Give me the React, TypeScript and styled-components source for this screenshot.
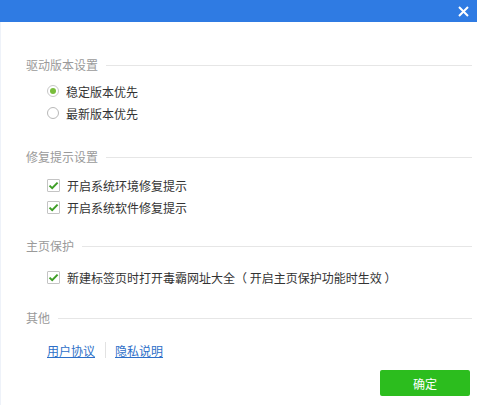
import styled, { createGlobalStyle } from 'styled-components';

const GlobalStyle = createGlobalStyle`
  html, body {
    margin: 0;
    padding: 0;
    background: #ffffff;
  }
  body {
    font-family: "Noto Sans CJK SC", "Liberation Sans", sans-serif;
    font-size: 12px;
  }
`;

type Gap = { $top: number };

const Window = styled.div`
  width: 477px;
  height: 405px;
  display: flex;
  flex-direction: column;
  background: #ffffff;
  overflow: hidden;
`;

const TitleBar = styled.div`
  height: 22px;
  flex: none;
  background: #2f7be3;
  display: flex;
  justify-content: flex-end;
  align-items: center;
  padding-right: 7px;
`;

const CloseButton = styled.button`
  width: 14px;
  height: 14px;
  border: 0;
  padding: 0;
  background: transparent;
  display: flex;
  align-items: center;
  justify-content: center;
  cursor: pointer;
`;

const Body = styled.div`
  flex: 1;
  display: flex;
  flex-direction: column;
  padding: 0 5px 0 25px;
  border-left: 1px solid #eef2f9;
`;

const SectionTitle = styled.div<Gap>`
  display: flex;
  align-items: center;
  gap: 8px;
  height: 16px;
  margin-top: ${(p) => p.$top}px;
  color: #9a9a9a;
  line-height: 16px;
  white-space: nowrap;

  &::after {
    content: '';
    flex: 1;
    height: 1px;
    background: #e6e6e6;
  }
`;

const Options = styled.div<Gap>`
  display: flex;
  flex-direction: column;
  margin-top: ${(p) => p.$top}px;
  padding-left: 21px;
`;

const OptionRow = styled.label`
  display: flex;
  align-items: center;
  gap: 7px;
  height: 22px;
  color: #333333;
  white-space: nowrap;
`;

const Radio = styled.span<{ $checked?: boolean }>`
  box-sizing: border-box;
  width: 12px;
  height: 12px;
  border-radius: 50%;
  border: 1px solid ${(p) => (p.$checked ? '#c8c8c8' : '#b8b8b8')};
  display: flex;
  align-items: center;
  justify-content: center;
  background: #ffffff;

  &::after {
    content: '';
    display: ${(p) => (p.$checked ? 'block' : 'none')};
    width: 6px;
    height: 6px;
    border-radius: 50%;
    background: #79bd3c;
  }
`;

const CheckBox = styled.span`
  box-sizing: border-box;
  width: 13px;
  height: 13px;
  border: 1px solid #c4c4c4;
  border-radius: 1px;
  display: flex;
  align-items: center;
  justify-content: center;
  background: #ffffff;
`;

const Links = styled.div<Gap>`
  display: flex;
  align-items: center;
  height: 22px;
  margin-top: ${(p) => p.$top}px;
  padding-left: 21px;
`;

const Link = styled.a`
  color: #2d6fc8;
  text-decoration: underline;
  cursor: pointer;
`;

const Divider = styled.span`
  width: 1px;
  height: 16px;
  background: #e2e2e2;
  margin: 0 9px 0 10px;
`;

const Footer = styled.div`
  display: flex;
  justify-content: flex-end;
  margin-top: 9px;
  padding-right: 2px;
`;

const OkButton = styled.button`
  width: 90px;
  height: 26px;
  border: 0;
  border-radius: 2px;
  background: #2cbd1e;
  color: #ffffff;
  font-family: inherit;
  font-size: 12px;
  cursor: pointer;
`;

const Check = () => (
  <svg width="11" height="9" viewBox="0 0 11 9">
    <path d="M1.5 4.6 L4.2 7.2 L9.6 1.6" fill="none" stroke="#3e9e26" strokeWidth="2" />
  </svg>
);

export default function App() {
  return (
    <Window>
      <GlobalStyle />
      <TitleBar>
        <CloseButton aria-label="关闭">
          <svg width="11" height="11" viewBox="0 0 11 11">
            <path d="M1 1 L10 10 M10 1 L1 10" stroke="#ffffff" strokeWidth="2" />
          </svg>
        </CloseButton>
      </TitleBar>
      <Body>
        <SectionTitle $top={35}>驱动版本设置</SectionTitle>
        <Options $top={7}>
          <OptionRow>
            <Radio $checked />
            稳定版本优先
          </OptionRow>
          <OptionRow>
            <Radio />
            最新版本优先
          </OptionRow>
        </Options>

        <SectionTitle $top={25}>修复提示设置</SectionTitle>
        <Options $top={9}>
          <OptionRow>
            <CheckBox>
              <Check />
            </CheckBox>
            开启系统环境修复提示
          </OptionRow>
          <OptionRow>
            <CheckBox>
              <Check />
            </CheckBox>
            开启系统软件修复提示
          </OptionRow>
        </Options>

        <SectionTitle $top={20}>主页保护</SectionTitle>
        <Options $top={12}>
          <OptionRow>
            <CheckBox>
              <Check />
            </CheckBox>
            新建标签页时打开毒霸网址大全（ 开启主页保护功能时生效 ）
          </OptionRow>
        </Options>

        <SectionTitle $top={22}>其他</SectionTitle>
        <Links $top={13}>
          <Link>用户协议</Link>
          <Divider />
          <Link>隐私说明</Link>
        </Links>

        <Footer>
          <OkButton>确定</OkButton>
        </Footer>
      </Body>
    </Window>
  );
}
